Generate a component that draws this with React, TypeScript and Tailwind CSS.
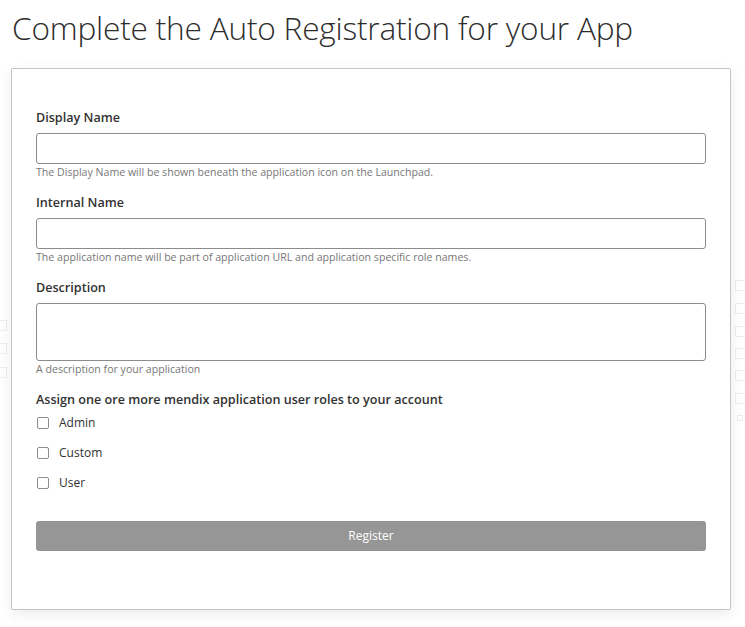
import React from "react";

const font = { fontFamily: '"Open Sans", "Noto Sans", sans-serif' };

function Field({ label, help, tall }: { label: string; help: string; tall?: boolean }) {
  return (
    <div className="flex flex-col">
      <label className="text-[12.6px] font-semibold text-[#323232] leading-[18px] mb-[6px]">{label}</label>
      {tall ? (
        <textarea className="w-full h-[58px] border border-[#8c8c8c] rounded-[3px] resize-none bg-white" />
      ) : (
        <input className="w-full h-[31px] border border-[#8c8c8c] rounded-[3px] bg-white" />
      )}
      <div className="text-[10.6px] text-[#777] leading-[14px] mt-[1px]">{help}</div>
    </div>
  );
}

function Check({ label }: { label: string }) {
  return (
    <div className="flex items-center h-[30px]">
      <span className="w-[12px] h-[12px] border border-[#8c8c8c] rounded-[2px] bg-white ml-[1px]" />
      <span className="ml-[10px] text-[12px] text-[#323232]">{label}</span>
    </div>
  );
}

const rightSquares = [280, 303, 326, 348, 370, 393];
const leftSquares = [320, 343, 367];

export default function App() {
  return (
    <div className="relative w-[745px] h-[627px] bg-white overflow-hidden" style={font}>
      {rightSquares.map((y) => (
        <span key={y} className="absolute left-[735px] w-[11px] h-[11px] border border-[#eeeeee]" style={{ top: y }} />
      ))}
      <span className="absolute left-[737px] top-[415px] w-[6px] h-[6px] border border-[#eeeeee]" />
      {leftSquares.map((y) => (
        <span key={y} className="absolute -left-[4px] w-[11px] h-[11px] border border-[#eeeeee]" style={{ top: y }} />
      ))}
      <h1 className="relative pl-[12px] pt-[8px] text-[31.6px] font-light text-[#2d2d2d] leading-[40px] tracking-[-0.2px]">
        Complete the Auto Registration for your App
      </h1>
      <div className="relative ml-[11px] mt-[20px] w-[720px] h-[542px] border border-[#c4c4c4] rounded-[2px] bg-white shadow-[0_4px_14px_rgba(0,0,0,0.08)] px-[24px] pt-[40px]">
        <div className="flex flex-col gap-[15px]">
          <Field label="Display Name" help="The Display Name will be shown beneath the application icon on the Launchpad." />
          <Field label="Internal Name" help="The application name will be part of application URL and application specific role names." />
          <Field label="Description" help="A description for your application" tall />
        </div>
        <div className="mt-[15px] text-[12.6px] font-semibold text-[#323232] leading-[18px]">
          Assign one ore more mendix application user roles to your account
        </div>
        <div className="flex flex-col -mt-[1px]">
          <Check label="Admin" />
          <Check label="Custom" />
          <Check label="User" />
        </div>
        <button className="mt-[23px] w-full h-[30px] rounded-[3px] bg-[#969696] text-white text-[12px]">
          Register
        </button>
      </div>
    </div>
  );
}
